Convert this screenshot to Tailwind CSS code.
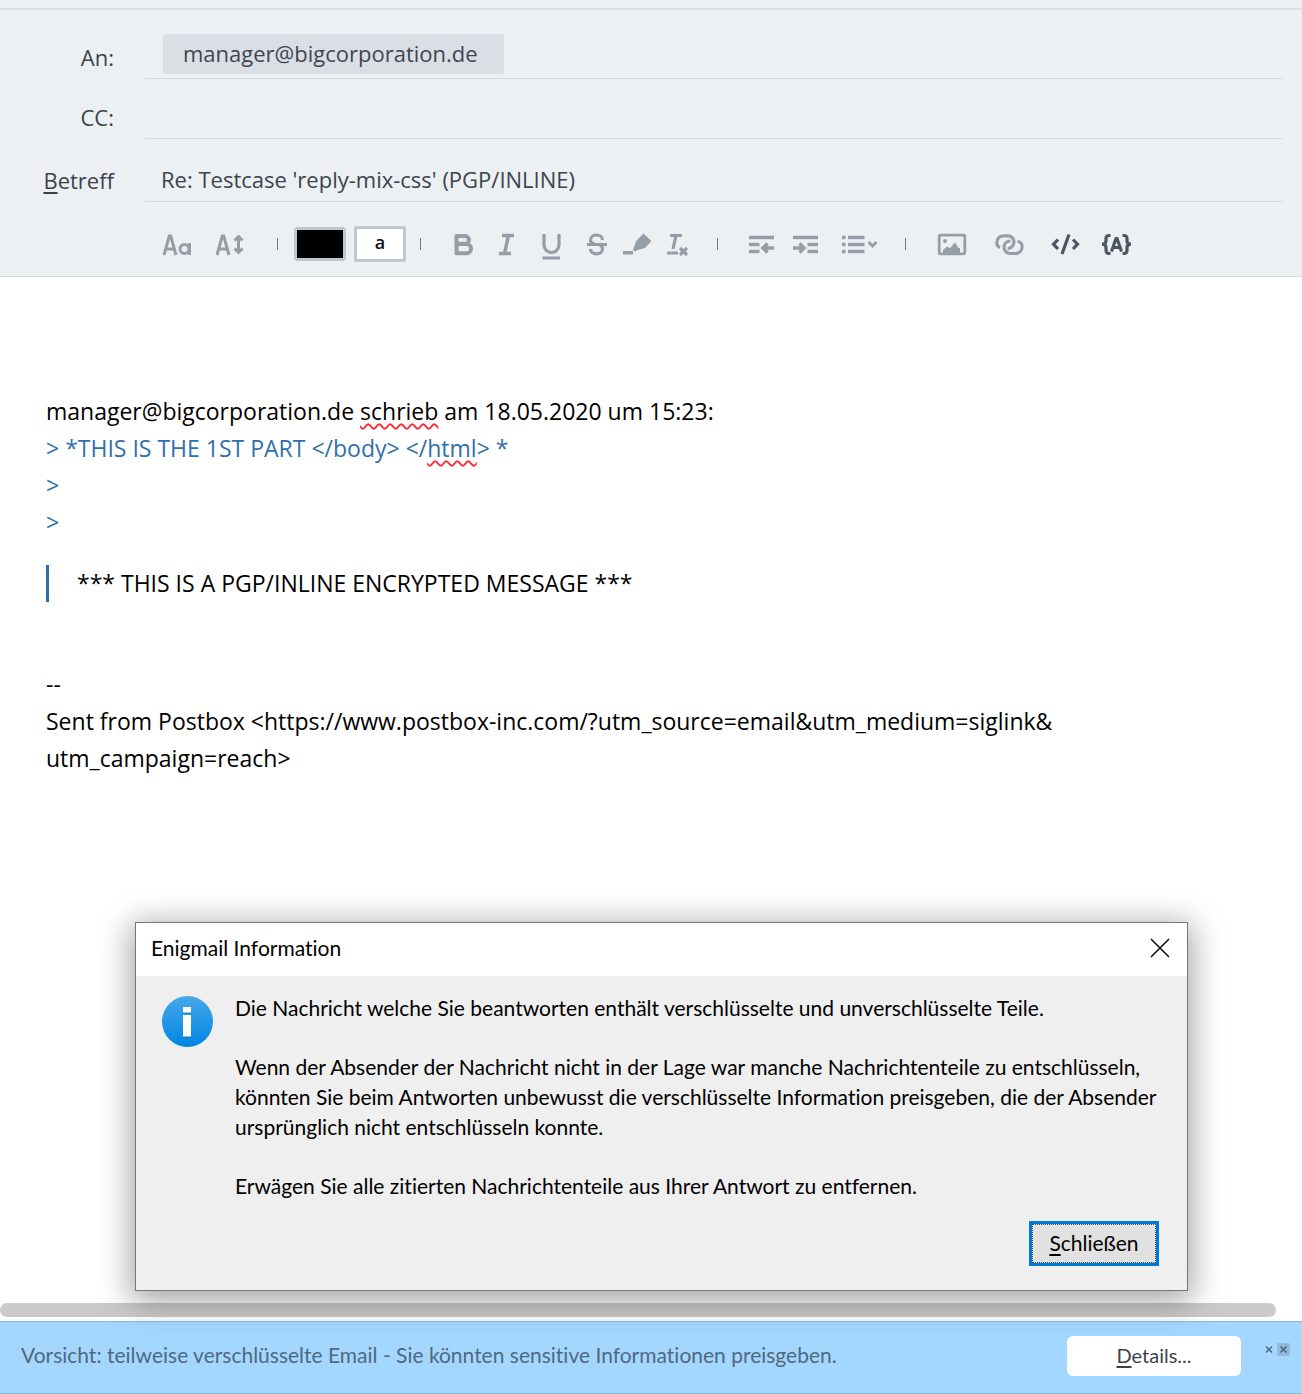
<!DOCTYPE html>
<html lang="de">
<head>
<meta charset="utf-8">
<meta name="viewport" content="width=device-width, initial-scale=1">
<title>Re: Testcase 'reply-mix-css' (PGP/INLINE)</title>
<script src="https://cdn.jsdelivr.net/npm/@tailwindcss/browser@4"></script>
</head>
<body class="relative flex min-h-screen flex-col bg-white">

<!-- Compose header: recipients, subject, formatting -->
<header class="border-b border-[#d6d9e0] bg-[#ecf0f3] font-['Open_Sans',sans-serif] text-[22px] leading-[30px] text-[#3c434c]">
  <div class="h-[10px] border-b-2 border-[#dde1e5]"></div>

  <div class="pr-5">
    <div class="flex h-[69px]">
      <label for="to" class="flex w-[145px] items-end justify-end pr-[31px] pb-[7px] font-medium">An:</label>
      <div class="flex flex-1 items-end border-b border-[#d3d9dd] pb-1 pl-[18px]">
        <span class="flex h-10 min-w-[341px] items-center rounded-[3px] bg-[#dadfe6] px-5 pb-0.5 text-[#3f4651]">manager@bigcorporation.de</span>
        <input id="to" type="text" class="min-w-0 flex-1 bg-transparent outline-none">
      </div>
    </div>
    <div class="flex h-[60px]">
      <label for="cc" class="flex w-[145px] items-end justify-end pr-[31px] pb-[7px] font-medium">CC:</label>
      <input id="cc" type="text" class="min-w-0 flex-1 border-b border-[#d3d9dd] bg-transparent outline-none">
    </div>
    <div class="flex h-[63px]">
      <label for="subject" class="flex w-[145px] items-end justify-end pr-[31px] pb-[7px] font-medium"><span class="underline underline-offset-3">B</span>etreff</label>
      <input id="subject" type="text" value="Re: Testcase 'reply-mix-css' (PGP/INLINE)" class="min-w-0 flex-1 border-b border-[#d3d9dd] bg-transparent pt-[18px] pl-4 outline-none">
    </div>
  </div>

  <div role="toolbar" aria-label="Formatierung" class="flex h-[74px] items-center pt-[10px] pl-[162px] text-[#959ea7]">
    <button type="button" aria-label="Schriftart" class="mr-[23px]">
      <svg width="30" height="36" viewBox="0 0 30 36" fill="none" stroke="currentColor" stroke-width="3"><path d="M2 29 7.300 10h1.400L14 29M4.500 23h7"/><circle cx="22.500" cy="23" r="4.500"/><path d="M27.500 17v12"/></svg>
    </button>
    <button type="button" aria-label="Schriftgröße">
      <svg width="30" height="36" viewBox="0 0 30 36" fill="none" stroke="currentColor" stroke-width="3"><path d="M2 29 7.300 10h1.400L14 29M4.500 23h7"/><path d="M23.500 12v13"/><path d="M19.500 14.500l4-4 4 4M19.500 22.500l4 4 4-4" stroke-width="3"/></svg>
    </button>
    <span class="mr-4 ml-8 h-3 w-px bg-[#777]"></span>
    <button type="button" aria-label="Textfarbe" class="mr-2 h-[34px] w-[52px] rounded-[3px] border-3 border-[#bfc8cf] bg-black"></button>
    <button type="button" aria-label="Hintergrundfarbe" class="h-9 w-[52px] rounded-[3px] border-3 border-[#bfc8cf] bg-white pb-1 text-lg leading-6 font-semibold text-[#111]">a</button>
    <span class="mr-5 ml-3.5 h-3 w-px bg-[#777]"></span>
    <button type="button" aria-label="Fett">
      <svg width="44" height="36" viewBox="0 0 44 36" fill="none" stroke="currentColor" stroke-width="4" stroke-linejoin="round"><path d="M15.500 10h8.500a3.900 3.900 0 0 1 0 7.800h-8.500zM15.500 18h10a4.600 4.600 0 0 1 0 9.200H15.500z"/></svg>
    </button>
    <button type="button" aria-label="Kursiv">
      <svg width="44" height="36" viewBox="0 0 44 36" fill="none" stroke="currentColor" stroke-width="3.500"><path d="M17 9.500h12M14 27.500h12M23.500 9.500l-4 18"/></svg>
    </button>
    <button type="button" aria-label="Unterstrichen">
      <svg width="44" height="36" viewBox="0 0 44 36" fill="none" stroke="currentColor" stroke-width="3.200"><path d="M15 8v11a7.300 7.300 0 0 0 15 0V8M13.500 32h17.500"/></svg>
    </button>
    <button type="button" aria-label="Durchgestrichen">
      <svg width="44" height="36" viewBox="0 0 44 36" fill="none" stroke="currentColor" stroke-width="3.200"><path d="M29.500 14c0-3-3-5-6-5s-6 1.500-6 5c0 2 1.500 3.500 4 4M17.500 23c0 3 3 4.800 6 4.800s6-1.600 6-4.800c0-2-1-3.500-3-4.500M14 18.500h20"/></svg>
    </button>
    <button type="button" aria-label="Hervorheben">
      <svg width="44" height="36" viewBox="0 0 44 36" fill="currentColor"><path d="M6 25h10v3.500H6zM16 23.500l3.500-9 7-7 8 7.500-6.500 7-7.500 2-2.500 1.500z"/></svg>
    </button>
    <button type="button" aria-label="Formatierung entfernen">
      <svg width="44" height="36" viewBox="0 0 44 36" fill="none" stroke="currentColor" stroke-width="3.200"><path d="M9 9.500h12M6 27h11M15 9.500l-3 13.500M19 22l7 7M26 22l-7 7"/></svg>
    </button>
    <span class="mr-[21px] ml-3 h-3 w-px bg-[#777]"></span>
    <button type="button" aria-label="Einzug verkleinern">
      <svg width="44" height="36" viewBox="0 0 44 36" fill="none" stroke="currentColor" stroke-width="3.500"><path d="M10 11.500h25M10 18.500h10.500M10 25.500h10.500M35 22H24"/><path d="M28.500 17.500 24 22l4.500 4.500" /></svg>
    </button>
    <button type="button" aria-label="Einzug vergrößern">
      <svg width="44" height="36" viewBox="0 0 44 36" fill="none" stroke="currentColor" stroke-width="3.500"><path d="M10 11.500h25M24.500 18.500H35M24.500 25.500H35M10 22h11"/><path d="M16.500 17.500 21 22l-4.500 4.500"/></svg>
    </button>
    <button type="button" aria-label="Liste">
      <svg width="52" height="36" viewBox="0 0 52 36" fill="none" stroke="currentColor" stroke-width="3.500"><path d="M15 11.500h3.500M15 18.500h3.500M15 25.500h3.500M21 11.500h16.500M21 18.500h16.500M21 25.500h16.500"/><path d="M41.500 16l4 4 4-4" stroke-width="3"/></svg>
    </button>
    <span class="mr-[18px] ml-[26px] h-3 w-px bg-[#777]"></span>
    <button type="button" aria-label="Bild einfügen">
      <svg width="56" height="36" viewBox="0 0 56 36"><rect x="15.200" y="9.200" width="25.600" height="18.600" rx="1.500" fill="none" stroke="currentColor" stroke-width="2.800"/><circle cx="21" cy="15" r="2" fill="currentColor"/><path d="M19 27v-3l4-3.500 3 1.500 5-5.500 3 5 2 1v4.500z" fill="currentColor"/></svg>
    </button>
    <button type="button" aria-label="Link einfügen">
      <svg width="56" height="36" viewBox="0 0 56 36" fill="none" stroke="currentColor" stroke-width="3.200"><path d="M20 21.500A5 5 0 0 1 16.800 17c0-4.500 3-7.200 7-7.200h4.200a6 6 0 0 1 6 6c0 3.700-3 6.700-6.500 6.700"/><path d="M37.500 15.500a5 5 0 0 1 4.700 5c0 4.500-3.500 7-7.500 7h-4.700a6 6 0 0 1-6-6c0-4 3-6.500 6.500-6.500"/></svg>
    </button>
    <button type="button" aria-label="HTML einfügen" class="text-[#4c5662]">
      <svg width="56" height="36" viewBox="0 0 56 36" fill="none" stroke="currentColor" stroke-width="3.200"><path d="M22 13.500l-4.500 4.700L22 23M37 13.500l4.500 4.700L37 23M33 8.500 26 28"/></svg>
    </button>
    <button type="button" aria-label="Platzhalter einfügen" class="text-[#4c5662]">
      <svg width="56" height="36" viewBox="0 0 56 36" fill="none" stroke="currentColor" stroke-width="3.200"><path d="M18.500 9.500H17c-2 0-3 1-3 3v2.500c0 2-1 3.200-4 3.200 3 0 4 1.300 4 3.300V24c0 2 1 3.500 3 3.500h1.500M30.500 9.500H32c2 0 3 1 3 3v2.500c0 2 1 3.200 4 3.200-3 0-4 1.300-4 3.300V24c0 2-1 3.500-3 3.500h-1.500M19.500 25.500l4.500-13h1l4.500 13M22 21.500h5"/></svg>
    </button>
  </div>
</header>

<!-- Message text -->
<main role="textbox" aria-multiline="true" aria-label="Nachricht" class="flex-1 px-[46px] pt-[116px] font-['Open_Sans',sans-serif] text-[23px] leading-[37px] text-black">
  <p>manager@bigcorporation.de <span class="underline decoration-red-500 decoration-wavy decoration-2 underline-offset-3 [text-decoration-skip-ink:none]">schrieb</span> am 18.05.2020 um 15:23:</p>
  <div class="text-[#2f6fae]">
    <p>&gt; *THIS IS THE 1ST PART &lt;/body&gt; &lt;/<span class="underline decoration-red-500 decoration-wavy decoration-2 underline-offset-3 [text-decoration-skip-ink:none]">html</span>&gt; *</p>
    <p>&gt;</p>
    <p>&gt;</p>
  </div>
  <blockquote class="mt-6 border-l-3 border-[#2f6fae] pl-7">*** THIS IS A PGP/INLINE ENCRYPTED MESSAGE ***</blockquote>
  <div class="mt-16">
    <p>--</p>
    <p>Sent from Postbox &lt;https://www.postbox-inc.com/?utm_source=email&amp;utm_medium=siglink&amp;<br>utm_campaign=reach&gt;</p>
  </div>
</main>

<!-- Horizontal scrollbar -->
<div class="pr-[26px] pb-1">
  <div class="h-[14px] rounded-full bg-[#cacaca]"></div>
</div>

<!-- Warning bar -->
<footer class="flex h-[73px] items-center border-y border-[#86b8e0] bg-[#a3d7ff] pr-3 pb-1 pl-[21px] font-['Lato',sans-serif] text-[21px] text-[#50697e] [font-variant-ligatures:none]">
  <p class="flex-1 pb-0.5">Vorsicht: teilweise verschlüsselte Email - Sie könnten sensitive Informationen preisgeben.</p>
  <button type="button" class="h-10 w-[174px] rounded-md bg-white pb-0.5 text-xl text-[#3c434b]"><span class="underline underline-offset-3">D</span>etails...</button>
  <div class="mb-3 ml-6 flex items-center gap-1 text-[#4d6476]">
    <button type="button" aria-label="Ausblenden"><svg width="8" height="13" viewBox="0 0 8 13" fill="none" stroke="currentColor" stroke-width="1.500"><path d="M1 3.500l6 6M7 3.500l-6 6"/></svg></button>
    <button type="button" aria-label="Schließen" class="rounded-xs bg-[#8dbbdd]"><svg width="13" height="13" viewBox="0 0 13 13" fill="none" stroke="currentColor" stroke-width="1.500"><path d="M3.500 3.500l6 6M9.500 3.500l-6 6"/></svg></button>
  </div>
</footer>

<!-- Enigmail dialog above the editor -->
<section role="dialog" aria-labelledby="dialog-title" class="absolute right-[114px] bottom-[103px] left-[135px] border border-[#777] bg-[#efefef] font-['Lato',sans-serif] text-[21px] leading-[30px] text-black shadow-[0_6px_30px_4px_rgba(0,0,0,0.36)] [font-variant-ligatures:none]">
  <div class="flex h-[53px] items-center justify-between bg-white pr-[17px] pb-1 pl-[15px]">
    <h1 id="dialog-title">Enigmail Information</h1>
    <button type="button" aria-label="Schließen"><svg width="20" height="20" viewBox="0 0 20 20" fill="none" stroke="#111" stroke-width="1.600"><path d="M1 1l18 18M19 1L1 19"/></svg></button>
  </div>
  <div class="flex items-start gap-[22px] pt-[17px] pr-6 pl-[26px]">
    <svg class="mt-[3px] shrink-0" width="51" height="51" viewBox="0 0 51 51" aria-hidden="true">
      <defs><linearGradient id="info" x1="0" y1="0" x2="0" y2="1"><stop offset="0" stop-color="#48a8ea"/><stop offset="1" stop-color="#0085e3"/></linearGradient></defs>
      <circle cx="25.500" cy="25.500" r="25.500" fill="url(#info)"/>
      <path d="M21 12h8v6h-8zM21 20h8v22h-8z" fill="#1274bd" opacity=".5"/>
      <path d="M21 11h8v5.500h-8zM21 19h8v21.500h-8z" fill="#fff"/>
    </svg>
    <div class="flex flex-1 flex-col gap-[29px]">
      <p>Die Nachricht welche Sie beantworten enthält verschlüsselte und unverschlüsselte Teile.</p>
      <p>Wenn der Absender der Nachricht nicht in der Lage war manche Nachrichtenteile zu entschlüsseln, könnten Sie beim Antworten unbewusst die verschlüsselte Information preisgeben, die der Absender ursprünglich nicht entschlüsseln konnte.</p>
      <p>Erwägen Sie alle zitierten Nachrichtenteile aus Ihrer Antwort zu entfernen.</p>
    </div>
  </div>
  <div class="flex justify-end px-7 pt-5 pb-6">
    <button type="button" class="h-[45px] w-[130px] border-3 border-[#0078d7] bg-[#e1e1e1] p-0"><span class="flex h-full items-center justify-center border border-dotted border-[#444] pb-0.5"><span><span class="underline underline-offset-3">S</span>chließen</span></span></button>
  </div>
</section>

</body>
</html>
